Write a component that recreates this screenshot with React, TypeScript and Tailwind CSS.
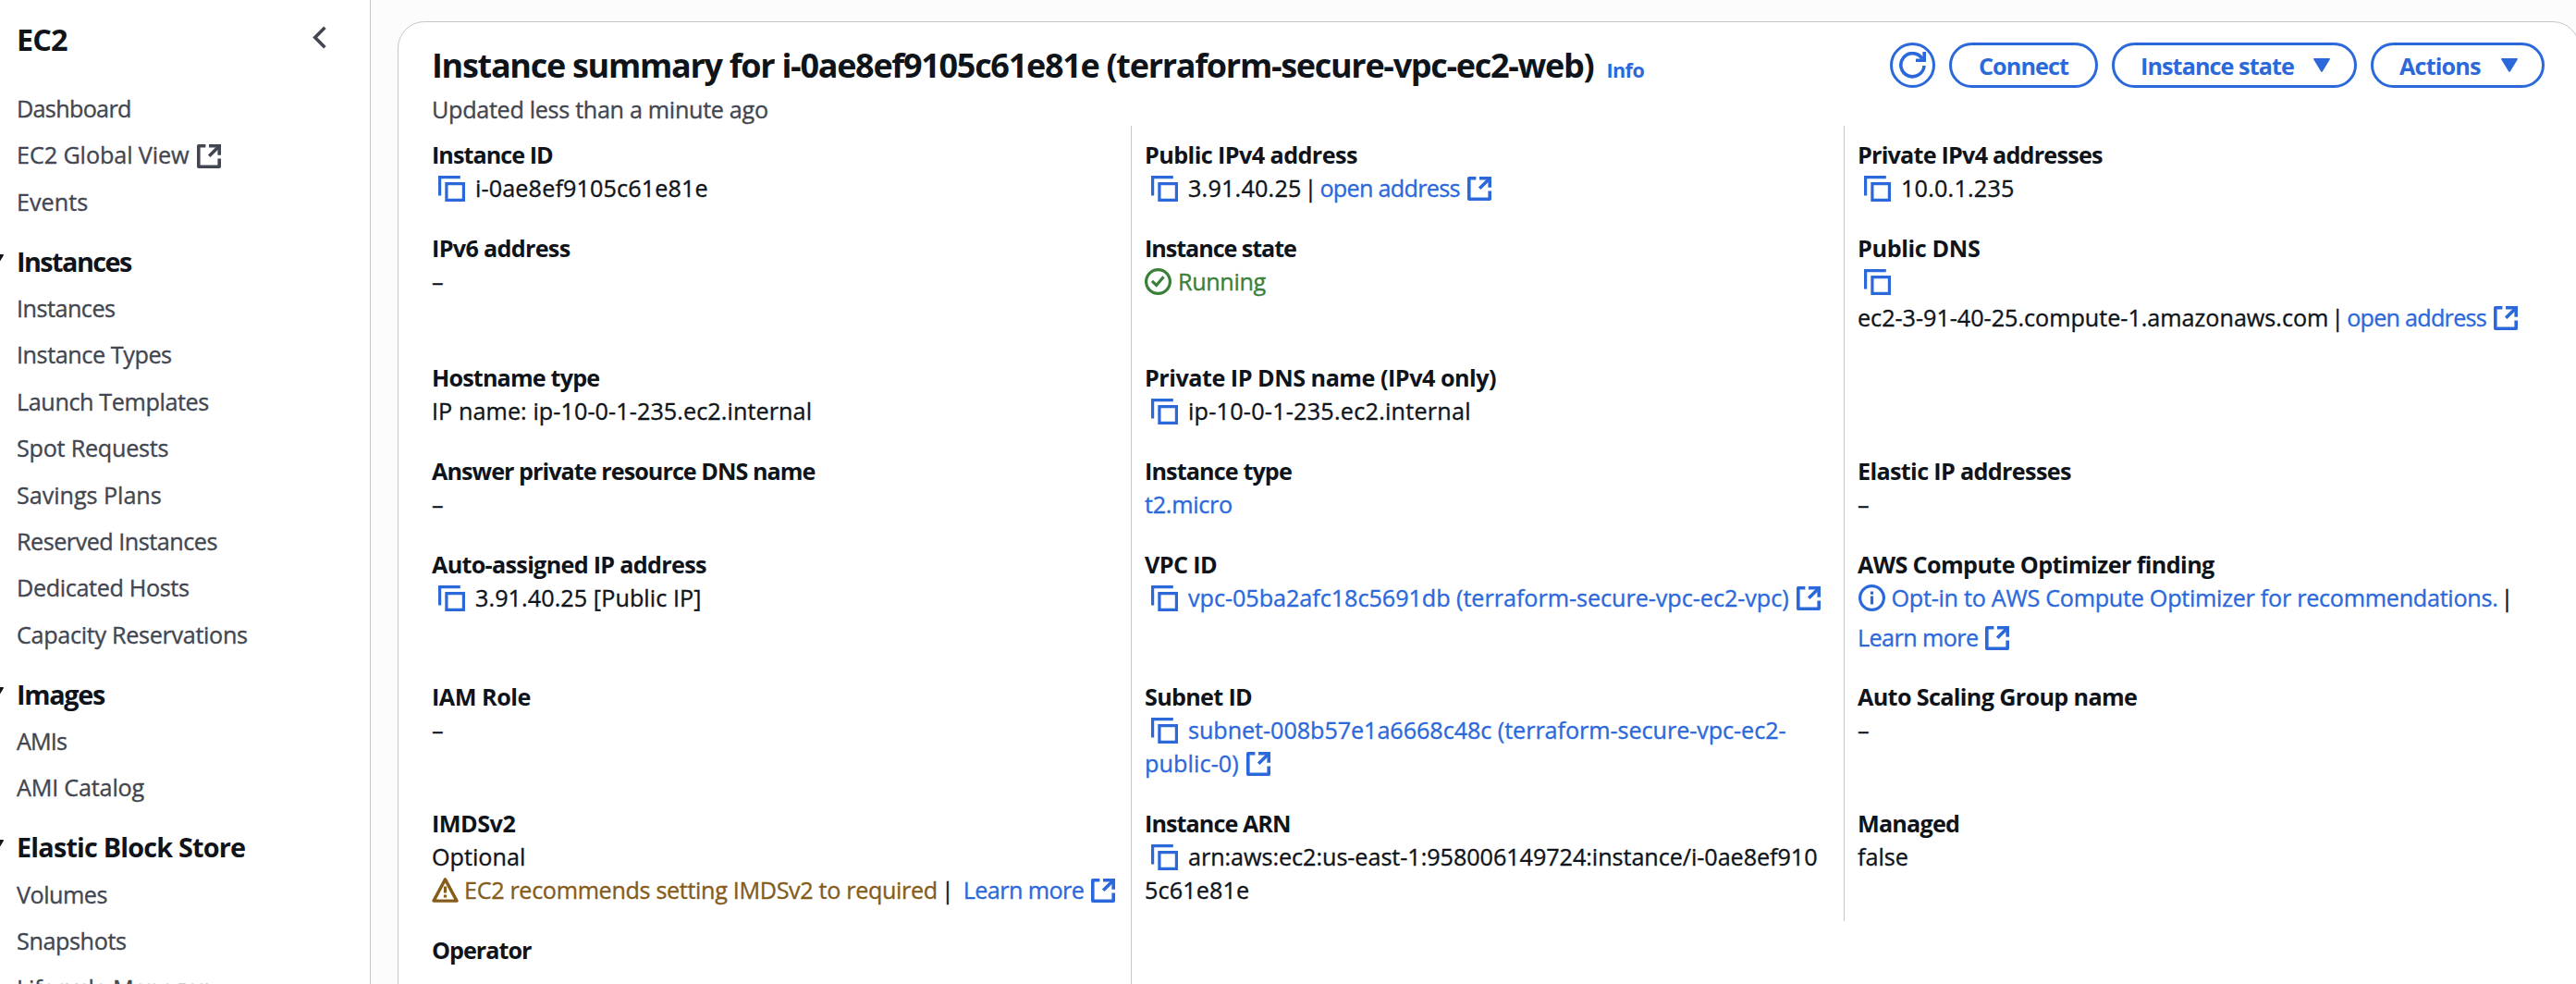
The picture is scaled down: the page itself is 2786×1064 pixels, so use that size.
import type { ReactNode } from "react";

function ExternalIcon({ className = "" }: { className?: string }) {
  return (
    <svg className={`h-[26px] w-[26px] shrink-0 ${className}`} viewBox="0 0 26 26" fill="none" stroke="currentColor" strokeWidth="3.6" strokeLinejoin="round">
      <path d="M9.4 1.8H1.8v22.4h22.4v-8.6" />
      <path d="M13 1.8h11.2v10" strokeLinejoin="miter" />
      <path d="M23.6 2.4 13.2 12.8" />
    </svg>
  );
}

function CopyIcon({ className = "" }: { className?: string }) {
  return (
    <svg className={`ml-[7px] h-[28px] w-[29px] shrink-0 text-[#2b69db] ${className}`} viewBox="0 0 29 28" fill="none" stroke="currentColor" strokeWidth="3.2">
      <path d="M1.6 21.6V1.6h22.2" />
      <path d="M8.9 8.7h18.5v17.7H8.9z" />
    </svg>
  );
}

function CheckCircleIcon() {
  return (
    <svg className="mt-1 h-[29px] w-[29px] shrink-0" viewBox="0 0 29 29" fill="none" stroke="currentColor" strokeWidth="3.2">
      <circle cx="14.5" cy="14.5" r="12.9" />
      <path d="m7.9 13.9 4.8 4.6 7.8-9.3" />
    </svg>
  );
}

function InfoCircleIcon() {
  return (
    <svg className="mt-1 ml-[0.5px] h-[29px] w-[29px] shrink-0" viewBox="0 0 29 29" fill="none" stroke="currentColor" strokeWidth="3.2">
      <circle cx="14.5" cy="14.5" r="12.9" />
      <path d="M14.5 12.6v8.8M14.5 7.4v3.4" />
    </svg>
  );
}

function WarningIcon() {
  return (
    <svg className="mt-[5px] h-[27px] w-[29px] shrink-0" viewBox="0 0 29 27" fill="none" stroke="currentColor" strokeWidth="3.4" strokeLinejoin="round">
      <path d="M14.5 1.9 27 25.1H2z" />
      <path d="M14.5 9.4v7M14.5 18.4v3.2" strokeWidth="3.2" />
    </svg>
  );
}

function RefreshIcon() {
  return (
    <svg className="h-[29px] w-[29px]" viewBox="0 0 29 29" fill="none" stroke="currentColor" strokeWidth="3.6">
      <path d="M27 15A12.6 12.6 0 1 1 25 7.4" />
      <path d="M27.2 0v9.2H18" />
    </svg>
  );
}

function Caret({ className = "" }: { className?: string }) {
  return (
    <svg className={`h-[15px] w-[18px] shrink-0 ${className}`} viewBox="0 0 18 15" fill="currentColor">
      <path d="M.9 0h16.2c.8 0 1.1.7.7 1.3L9.9 14.2c-.4.8-1.4.8-1.8 0L.2 1.3C-.2.7.1 0 .9 0Z" />
    </svg>
  );
}

type NavEntry = { label: string; tracking: string; external?: boolean };
type NavGroup = { title?: string; tracking?: string; items: NavEntry[] };

const navGroups: NavGroup[] = [
  {
    items: [
      { label: "Dashboard", tracking: "tracking-[-0.7px]" },
      { label: "EC2 Global View", tracking: "tracking-[-0.1px]", external: true },
      { label: "Events", tracking: "tracking-normal" },
    ],
  },
  {
    title: "Instances",
    tracking: "tracking-[-1.55px]",
    items: [
      { label: "Instances", tracking: "tracking-[-0.51px]" },
      { label: "Instance Types", tracking: "tracking-[-0.43px]" },
      { label: "Launch Templates", tracking: "tracking-[-0.4px]" },
      { label: "Spot Requests", tracking: "tracking-[-0.25px]" },
      { label: "Savings Plans", tracking: "tracking-[-0.05px]" },
      { label: "Reserved Instances", tracking: "tracking-[-0.5px]" },
      { label: "Dedicated Hosts", tracking: "tracking-[-0.36px]" },
      { label: "Capacity Reservations", tracking: "tracking-[-0.32px]" },
    ],
  },
  {
    title: "Images",
    tracking: "tracking-[-1.3px]",
    items: [
      { label: "AMIs", tracking: "tracking-[-0.87px]" },
      { label: "AMI Catalog", tracking: "tracking-[-0.2px]" },
    ],
  },
  {
    title: "Elastic Block Store",
    tracking: "tracking-[-0.81px]",
    items: [
      { label: "Volumes", tracking: "tracking-[-0.49px]" },
      { label: "Snapshots", tracking: "tracking-[-0.41px]" },
      { label: "Lifecycle Manager", tracking: "tracking-[-0.2px]" },
    ],
  },
];

function Sidebar() {
  return (
    <aside className="h-full w-[401px] shrink-0 overflow-hidden border-r border-[#c6c6cd] bg-white pt-[22px] pl-[18px]">
      <div className="flex h-[77px] items-start justify-between pr-[47px]">
        <h2 className="text-[32.4px] leading-10 font-bold tracking-[-0.89px] text-[#0f141a] [-webkit-text-stroke:0]">EC2</h2>
        <svg className="mt-[6px] h-[25px] w-[15px] text-[#424650]" viewBox="0 0 15 25" fill="none" stroke="currentColor" strokeWidth="3.6">
          <path d="M13.4 1.8 2.7 12.5l10.7 10.7" />
        </svg>
      </div>
      <nav className="flex flex-col gap-[28.9px]">
        {navGroups.map((group, index) => (
          <div key={index} className="flex flex-col gap-[14.4px]">
            {group.title && (
              <div className="flex items-start text-[#0f141a]">
                <Caret className="mt-[10px] -ml-[32px]" />
                <h3 className={`ml-[14px] text-[28.8px] leading-9 font-bold [-webkit-text-stroke:0] ${group.tracking}`}>{group.title}</h3>
              </div>
            )}
            {group.items.map((item) => (
              <a key={item.label} className={`flex items-start whitespace-nowrap text-[#424650] ${item.tracking}`}>
                {item.label}
                {item.external && <ExternalIcon className="mt-[7px] ml-[9px]" />}
              </a>
            ))}
          </div>
        ))}
      </nav>
    </aside>
  );
}

function Cell({ label, tracking, children, className = "" }: { label?: string; tracking?: string; children?: ReactNode; className?: string }) {
  return (
    <div className={`pt-[12.6px] pb-[16.2px] whitespace-nowrap ${className}`}>
      {label && <div className={`font-bold [-webkit-text-stroke:0] ${tracking}`}>{label}</div>}
      {children}
    </div>
  );
}

const first = "pl-[36px]";
const divided = "border-l border-[#c6c6cd] pl-[14px]";

function Line({ children, className = "" }: { children: ReactNode; className?: string }) {
  return <div className={`flex items-start ${className}`}>{children}</div>;
}

function Copyable({ children, className = "" }: { children: ReactNode; className?: string }) {
  return (
    <>
      <CopyIcon className="mt-[5px]" />
      <span className={`ml-[11px] ${className}`}>{children}</span>
    </>
  );
}

function Link({ children, className = "" }: { children: ReactNode; className?: string }) {
  return (
    <a className={`flex items-start text-[#2b69db] ${className}`}>
      {children}
      <ExternalIcon className="mt-[6px] ml-[8px]" />
    </a>
  );
}

function SummaryGrid() {
  return (
    <div className="mt-[0.4px] grid grid-cols-[792px_771px_1fr] text-[#0f141a]">
      <Cell className={first} label="Instance ID" tracking="tracking-[-0.98px]">
        <Line><Copyable className="tracking-[0.12px]">i-0ae8ef9105c61e81e</Copyable></Line>
      </Cell>
      <Cell className={divided} label="Public IPv4 address" tracking="tracking-[-0.59px]">
        <Line>
          <Copyable className="tracking-[0.19px]">3.91.40.25</Copyable>
          <span className="mx-[3px]">|</span>
          <Link className="tracking-[-0.72px]">open address</Link>
        </Line>
      </Cell>
      <Cell className={divided} label="Private IPv4 addresses" tracking="tracking-[-0.79px]">
        <Line><Copyable className="tracking-[0.19px]">10.0.1.235</Copyable></Line>
      </Cell>

      <Cell className={first} label="IPv6 address" tracking="tracking-[-0.7px]">–</Cell>
      <Cell className={divided} label="Instance state" tracking="tracking-[-1.08px]">
        <Line className="text-[#3a8039]">
          <CheckCircleIcon />
          <span className="ml-[7px] tracking-[-0.37px]">Running</span>
        </Line>
      </Cell>
      <Cell className={divided} label="Public DNS" tracking="tracking-[-0.37px]">
        <Line className="h-[39.6px]"><CopyIcon className="mt-[5px]" /></Line>
        <Line>
          <span className="tracking-[-0.03px]">ec2-3-91-40-25.compute-1.amazonaws.com</span>
          <span className="mx-[3px]">|</span>
          <Link className="tracking-[-0.76px]">open address</Link>
        </Line>
      </Cell>

      <Cell className={first} label="Hostname type" tracking="tracking-[-0.85px]">
        <div className="tracking-[0.07px]">IP name: ip-10-0-1-235.ec2.internal</div>
      </Cell>
      <Cell className={divided} label="Private IP DNS name (IPv4 only)" tracking="tracking-[-0.5px]">
        <Line><Copyable className="tracking-[0.23px]">ip-10-0-1-235.ec2.internal</Copyable></Line>
      </Cell>
      <Cell className={divided} />

      <Cell className={first} label="Answer private resource DNS name" tracking="tracking-[-0.97px]">–</Cell>
      <Cell className={divided} label="Instance type" tracking="tracking-[-0.9px]">
        <a className="tracking-[-0.29px] text-[#2b69db]">t2.micro</a>
      </Cell>
      <Cell className={divided} label="Elastic IP addresses" tracking="tracking-[-0.67px]">–</Cell>

      <Cell className={first} label="Auto-assigned IP address" tracking="tracking-[-0.71px]">
        <Line><Copyable className="tracking-[0.06px]">3.91.40.25 [Public IP]</Copyable></Line>
      </Cell>
      <Cell className={divided} label="VPC ID" tracking="tracking-[-0.62px]">
        <Line>
          <CopyIcon className="mt-[5px]" />
          <Link className="ml-[11px] tracking-[-0.05px]">vpc-05ba2afc18c5691db (terraform-secure-vpc-ec2-vpc)</Link>
        </Line>
      </Cell>
      <Cell className={divided} label="AWS Compute Optimizer finding" tracking="tracking-[-0.63px]">
        <Line className="h-[43px]">
          <a className="flex items-start text-[#2b69db]">
            <InfoCircleIcon />
            <span className="ml-[7px] tracking-[-0.28px]">Opt-in to AWS Compute Optimizer for recommendations.</span>
          </a>
          <span className="ml-[3px]">|</span>
        </Line>
        <Line><Link className="tracking-[-0.6px]">Learn more</Link></Line>
      </Cell>

      <Cell className={first} label="IAM Role" tracking="tracking-[-0.5px]">–</Cell>
      <Cell className={divided} label="Subnet ID" tracking="tracking-[-0.7px]">
        <Line>
          <CopyIcon className="mt-[5px]" />
          <a className="ml-[11px] tracking-[-0.07px] text-[#2b69db]">subnet-008b57e1a6668c48c (terraform-secure-vpc-ec2-</a>
        </Line>
        <Line><Link className="tracking-[0.1px]">public-0)</Link></Line>
      </Cell>
      <Cell className={divided} label="Auto Scaling Group name" tracking="tracking-[-0.66px]">–</Cell>

      <Cell className={first} label="IMDSv2" tracking="tracking-[-0.5px]">
        <div>Optional</div>
        <Line>
          <span className="flex items-start text-[#855c1b]">
            <WarningIcon />
            <span className="ml-[6px] tracking-[-0.35px]">EC2 recommends setting IMDSv2 to required</span>
          </span>
          <span className="mr-[10px] ml-[4px]">|</span>
          <Link className="tracking-[-0.6px]">Learn more</Link>
        </Line>
      </Cell>
      <Cell className={divided} label="Instance ARN" tracking="tracking-[-0.95px]">
        <Line><Copyable className="tracking-[-0.06px]">arn:aws:ec2:us-east-1:958006149724:instance/i-0ae8ef910</Copyable></Line>
        <div className="tracking-[0.11px]">5c61e81e</div>
      </Cell>
      <Cell className={divided} label="Managed" tracking="tracking-[-0.81px]">false</Cell>

      <Cell className={`h-[100px] ${first}`} label="Operator" tracking="tracking-[-1.01px]" />
      <Cell className={divided} />
    </div>
  );
}

const button =
  "flex h-[49px] items-center rounded-full border-[3px] border-[#2b69db] font-bold text-[#2b69db] whitespace-nowrap [-webkit-text-stroke:0]";

function SummaryHeader() {
  return (
    <header className="flex items-start justify-between pt-[22px] pr-[37px] pl-[36px]">
      <div className="pt-[3px]">
        <div className="flex items-baseline whitespace-nowrap [-webkit-text-stroke:0]">
          <h1 className="text-[36px] leading-[44px] font-bold tracking-[-1.3px] text-[#0f141a]">
            Instance summary for i-0ae8ef9105c61e81e (terraform-secure-vpc-ec2-web)
          </h1>
          <a className="ml-[14px] text-[21.6px] leading-9 font-bold tracking-[-0.57px] text-[#2b69db]">Info</a>
        </div>
        <p className="mt-[6px] tracking-[-0.32px] text-[#424650]">Updated less than a minute ago</p>
      </div>
      <div className="flex gap-[15px]">
        <button className={`${button} w-[49px] justify-center`} aria-label="Refresh">
          <RefreshIcon />
        </button>
        <button className={`${button} w-[161px] justify-center tracking-[-0.93px]`}>Connect</button>
        <button className={`${button} w-[265px] justify-between pr-[26px] pl-[28px] tracking-[-0.93px]`}>
          Instance state
          <Caret />
        </button>
        <button className={`${button} w-[188px] justify-between pr-[26px] pl-[28px] tracking-[-0.85px]`}>
          Actions
          <Caret />
        </button>
      </div>
    </header>
  );
}

export default function App() {
  return (
    <div className="flex h-[1064px] w-[2786px] overflow-hidden bg-[#fcfcfd] font-['Open_Sans','Noto_Sans',sans-serif] text-[25.2px] leading-9 [-webkit-text-stroke:0.35px]">
      <Sidebar />
      <main className="mt-[23px] ml-[29px] h-[1080px] w-[2360px] shrink-0 rounded-t-[29px] border border-[#c6c6cd] bg-white">
        <SummaryHeader />
        <SummaryGrid />
      </main>
    </div>
  );
}
